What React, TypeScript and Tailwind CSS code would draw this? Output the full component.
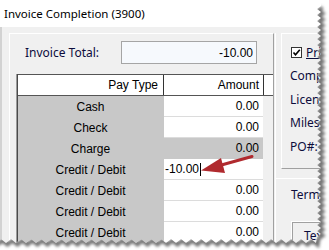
import React from "react";

const rows = [
  { t: "Cash", a: "0.00" },
  { t: "Check", a: "0.00" },
  { t: "Charge", a: "0.00", gray: true },
  { t: "Credit / Debit", a: "-10.00", edit: true },
  { t: "Credit / Debit", a: "0.00" },
  { t: "Credit / Debit", a: "0.00" },
  { t: "Credit / Debit", a: "0.00" },
];

function tornPoints() {
  const pts: string[] = [];
  let i = 0;
  for (let y = 6; y <= 238; y += 3) {
    const x = i % 2 === 0 ? 321 : 317;
    pts.push(`${x},${y}`);
    i++;
  }
  i = 0;
  for (let x = 316; x >= -4; x -= 5) {
    const y = i % 2 === 0 ? 243 : 239;
    pts.push(`${x},${y}`);
    i++;
  }
  return pts;
}

export default function App() {
  const pts = tornPoints();
  const white = `M329,-2 L321,-2 L${pts.join(" L")} L-4,252 L333,252 L333,-2 Z`;
  const line = `M321,6 L${pts.join(" L")}`;
  return (
    <div
      className="relative w-[329px] h-[250px] overflow-hidden bg-[#f0f0f0] text-black"
      style={{ fontFamily: '"Liberation Sans", Arial, sans-serif' }}
    >
      {/* title bar */}
      <div
        className="h-[27px] bg-white flex items-center pl-[4px] text-[11.5px] text-black"
        style={{ fontFamily: '"Noto Sans", sans-serif' }}
      >
        Invoice Completion (3900)
      </div>

      {/* body */}
      <div className="flex h-[223px] border-l-2 border-[#d2d2d2] pt-[6px]">
        {/* left panel */}
        <div className="ml-[7px] w-[265px] border-l border-t border-white border-r border-r-[#a0a0a0] flex flex-col">
          <div className="flex items-center pt-[7px] pl-[15px]">
            <div
              className="w-[96px] text-[12px] text-[#0c0c3c]"
              style={{ fontFamily: '"Noto Sans", sans-serif' }}
            >
              Invoice Total:
            </div>
            <div className="w-[136px] h-[23px] border border-[#a5a5a5] bg-[#f6f9fd] flex items-center justify-end pr-[3px] text-[12px]">
              -10.00
            </div>
          </div>

          {/* grid */}
          <div className="mt-[10px] ml-[6px] border-l border-[#9a9a9a]">
            <div className="border-l border-[#4a4a4a]">
              <div className="flex h-[22px] border-t border-b border-[#555555] bg-white text-[12px]">
                <div className="w-[146px] border-r border-[#333333] flex items-center justify-end pr-[5px]">
                  Pay Type
                </div>
                <div className="w-[100px] border-r border-[#333333] flex items-center justify-end pr-[4px]">
                  Amount
                </div>
              </div>
              {rows.map((r, idx) => (
                <div key={idx} className="flex h-[21px] text-[12px]">
                  <div className="w-[146px] bg-[#c8c8c8] flex items-center justify-center pr-[1px]">
                    {r.t}
                  </div>
                  {r.edit ? (
                    <div className="w-[99px] bg-white border-b border-[#dcdcdc] flex items-center pl-[1px]">
                      <span>{r.a}</span>
                      <span className="w-[1px] h-[13px] bg-black ml-[1px]" />
                    </div>
                  ) : (
                    <div
                      className={
                        r.gray
                          ? "w-[99px] bg-[#c8c8c8] border-b border-[#c8c8c8] flex items-center justify-end pr-[4px]"
                          : "w-[99px] bg-white border-b border-[#dcdcdc] flex items-center justify-end pr-[4px]"
                      }
                    >
                      {r.a}
                    </div>
                  )}
                </div>
              ))}
            </div>
          </div>
        </div>

        {/* right column */}
        <div className="ml-[1px] border-l border-white flex-1 flex flex-col overflow-hidden">
          <div
            className="ml-[5px] h-[136px] border-l border-t border-white border-b border-b-[#a0a0a0] flex flex-col text-[12px] text-[#0c0c3c]"
            style={{ fontFamily: '"Noto Sans", sans-serif' }}
          >
            <div className="flex items-center pt-[13px] pl-[9px] whitespace-nowrap">
              <div className="w-[11px] h-[11px] border border-[#333333] bg-white flex items-center justify-center shrink-0">
                <svg width="9" height="9" viewBox="0 0 9 9">
                  <path d="M1.5 4.5 L3.5 6.8 L7.8 1.8" stroke="#000" strokeWidth="1.6" fill="none" />
                </svg>
              </div>
              <span className="ml-[4px] underline leading-[11px]">Print</span>
            </div>
            <div className="pl-[8px] mt-[11px] leading-[14px] whitespace-nowrap">Company</div>
            <div className="pl-[8px] mt-[10px] leading-[14px] whitespace-nowrap">License</div>
            <div className="pl-[8px] mt-[9px] leading-[14px] whitespace-nowrap">Miles In</div>
            <div className="pl-[8px] mt-[10px] leading-[14px] whitespace-nowrap">PO#:</div>
          </div>
          <div
            className="mt-[9px] border-t border-white flex flex-col text-[12px] text-[#0c0c3c]"
            style={{ fontFamily: '"Noto Sans", sans-serif' }}
          >
            <div className="pl-[15px] mt-[9px] leading-[14px] whitespace-nowrap">Terms</div>
            <div className="ml-[15px] mt-[19px] h-[26px] border-l border-t border-white shadow-[inset_1px_1px_0_#a0a0a0] pl-[12px] pt-[5px] whitespace-nowrap">
              Text
            </div>
          </div>
        </div>
      </div>

      {/* overlays: arrow and torn edges */}
      <svg className="absolute inset-0 pointer-events-none" width="329" height="250" viewBox="0 0 329 250">
        <defs>
          <clipPath id="tornClip">
            <path d={white} />
          </clipPath>
          <filter id="blur" x="-10%" y="-10%" width="120%" height="120%">
            <feGaussianBlur stdDeviation="1.4" />
          </filter>
        </defs>
        <line x1="252" y1="156.5" x2="216" y2="166.5" stroke="#b02a2e" strokeWidth="3" strokeLinecap="round" />
        <polygon points="201,170.5 221,158 225,173" fill="#b02a2e" />
        <path d={white} fill="#ffffff" />
        <g clipPath="url(#tornClip)">
          <path d={line} transform="translate(1.5,1.5)" stroke="#6e6e6e" strokeWidth="4" fill="none" filter="url(#blur)" />
        </g>
      </svg>
    </div>
  );
}
